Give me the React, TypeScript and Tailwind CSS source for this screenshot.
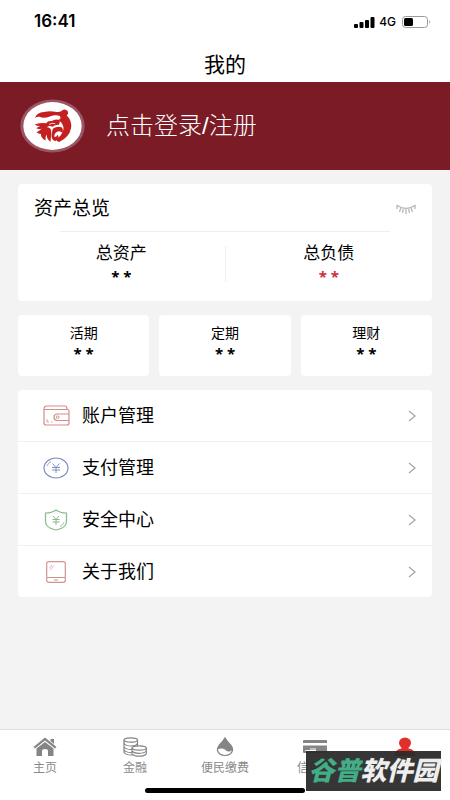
import type { ReactNode } from "react";

const FONT = "font-['Liberation_Sans','Noto_Sans_CJK_SC',sans-serif]";

function DragonLogo() {
  return (
    <svg viewBox="62 58 196 162" className="h-[54px] w-[65px] shrink-0" aria-hidden="true">
      <ellipse cx="160" cy="139" rx="97" ry="80" fill="#9c5563" />
      <ellipse cx="160" cy="139" rx="88" ry="72" fill="#fff" />
      <g fill="#c3201f">
        <path d="M107 115Q113 99 134 97Q152 93 168 96Q180 99 187 94Q193 86 204 92Q211 99 203 107Q219 121 216 146Q210 174 180 187Q172 185 170 179Q190 168 193 149Q194 132 178 121Q188 116 182 109Q170 103 152 110Q133 117 121 111Q113 110 107 115Z" />
        <path d="M106 135Q121 127 141 131Q146 122 158 124Q169 116 183 122L180 135Q168 134 160 141Q150 136 143 143Q155 144 156 154Q156 170 154 187Q142 179 143 165Q138 170 139 183Q125 176 125 163Q117 163 112 158Q122 152 127 147Q117 150 111 146Q117 141 123 139Q113 139 106 135Z" />
        <path d="M161 147Q175 138 187 143Q194 149 190 160Q183 153 174 156Q164 161 166 172Q173 173 176 165Q182 177 169 184Q156 183 157 163Z" />
      </g>
      <path d="M150 134Q159 129 168 132" fill="none" stroke="#fff" strokeWidth="2.5" />
    </svg>
  );
}

function ClosedEye() {
  return (
    <svg viewBox="0 0 20 11" className="h-[11px] w-5" fill="none" stroke="#bdbdbd" strokeWidth="1.4" aria-hidden="true">
      <path d="M0.5 1Q10 8 19.5 1M1 1V5M19 1V5M4.8 4L3.5 8M10 5V10M15.2 4L16.5 8M7.300 4.800L6.500 9M12.700 4.800L13.500 9" />
    </svg>
  );
}

function WalletIcon() {
  return (
    <svg viewBox="0 0 27 21" className="h-[21px] w-[27px]" fill="none" stroke="#d58c8c" aria-hidden="true">
      <path d="M1 4Q1 1 4 1H22Q24 1 24 4M1 4.5H24.5Q26 4.500 26 6V18Q26 20 24 20H3Q1 20 1 18V4M26 9H14Q11 9.500 11 12.200Q11 15 14 15.500H26" strokeWidth="1.200" />
      <circle cx="14.700" cy="12.200" r="1.300" />
      <path d="M4 14V17H6M8 17H9.500" strokeWidth="0.800" />
    </svg>
  );
}

function YuanIcon() {
  return (
    <svg viewBox="0 0 26 22" className="h-[22px] w-[26px]" fill="none" stroke="#7b90c0" aria-hidden="true">
      <ellipse cx="13" cy="11" rx="12" ry="10" strokeWidth="1.200" />
      <path d="M9.500 6.500L13 10.500L16.500 6.500M13 10.500V16M9 10.500H17M9 13H17" />
      <path d="M4 9Q5 6 8 4.500" strokeWidth="0.800" />
    </svg>
  );
}

function ShieldIcon() {
  return (
    <svg viewBox="0 0 24 22" className="h-[22px] w-6" fill="none" stroke="#86b98c" aria-hidden="true">
      <path d="M12 1Q8 4 1.500 4V13Q2 19 12 21Q22 19 22.500 13V4Q16 4 12 1Z" strokeWidth="1.200" />
      <path d="M9 7L12 10.500L15 7M12 10.500V16M8.500 10.500H15.500M8.500 13H15.500" />
      <path d="M20 13Q19 16.500 16 17.500" strokeWidth="0.800" />
    </svg>
  );
}

function TabletIcon() {
  return (
    <svg viewBox="0 0 20 22" className="h-[22px] w-5" fill="none" stroke="#d2938f" aria-hidden="true">
      <rect x="0.700" y="0.700" width="18.600" height="20.600" rx="2" strokeWidth="1.200" />
      <path d="M1 16.500H19M8 19H12" />
      <path d="M3.500 7L6 4M4 9L8 4.500" strokeWidth="0.700" />
    </svg>
  );
}

function Chevron() {
  return (
    <svg viewBox="0 0 8 12" className="h-3 w-2" fill="none" stroke="#a3a3a3" strokeWidth="1.200" aria-hidden="true">
      <path d="M1 1L7 6L1 11" />
    </svg>
  );
}

function HomeIcon() {
  return (
    <svg viewBox="0 0 24 20" className="h-5 w-6" fill="#858585" aria-hidden="true">
      <path d="M12 0.500L23.500 10L22 11.500L12 3.500L2 11.500L0.500 10Z" />
      <path d="M17.500 2H21V7L17.500 4Z" />
      <path d="M12 5L20.500 11.500V19H15V14Q15 12 12 12Q9 12 9 14V19H3.500V11.500Z" />
    </svg>
  );
}

function CoinsIcon() {
  return (
    <svg viewBox="0 0 24 20" className="h-5 w-6" fill="#fff" stroke="#858585" strokeWidth="1.200" aria-hidden="true">
      <path d="M1 3V15.500Q3 18 8 18Q13 18 14.500 15.500V3" />
      <path d="M1 6.500Q3 9 8 9Q13 9 14.500 6.500M1 10Q3 12.500 8 12.500H9M1 13Q3 15.500 8 15.500H9" fill="none" />
      <ellipse cx="7.750" cy="3" rx="6.750" ry="2.200" />
      <path d="M9 11V16.800Q11 19.200 16 19.200Q21.500 19.200 23.300 16.800V11" />
      <path d="M9 14Q11 16.300 16 16.300Q21.500 16.300 23.300 14" fill="none" />
      <ellipse cx="16.150" cy="11" rx="7.150" ry="2.200" />
    </svg>
  );
}

function DropIcon() {
  return (
    <svg viewBox="0 0 18 20" className="h-5 w-[18px]" aria-hidden="true">
      <path d="M9 1Q11 4.500 15 8.500Q17 11 16.500 13.500Q15 18.500 9 18.500Q3 18.500 1.500 13.500Q1 11 3 8.500Q7 4.500 9 1Z" fill="#fff" stroke="#858585" strokeWidth="1.200" />
      <path d="M9 0.500Q11 4.500 15 8.500Q17.500 11 16.500 13Q12.500 16 9.500 13Q6 10.500 1.500 12.500Q1 11 3 8.500Q7 4.500 9 0.500Z" fill="#858585" />
    </svg>
  );
}

function CardIcon() {
  return (
    <svg viewBox="0 0 24 20" className="h-5 w-6" fill="#858585" aria-hidden="true">
      <path d="M0 4Q0 3 1 3H23Q24 3 24 4V6H0Z" />
      <path d="M0 8.500H24V15Q24 16 23 16H1Q0 16 0 15Z" />
      <path d="M2.500 13.500H13M7 12H13" stroke="#fff" strokeWidth="1" />
    </svg>
  );
}

function PersonIcon() {
  return (
    <svg viewBox="0 0 22 20" className="h-5 w-[22px]" fill="#e0302c" aria-hidden="true">
      <ellipse cx="11" cy="6" rx="6" ry="5.500" />
      <path d="M7.500 9H14.500V11.500Q21 12.500 21.500 18V19H0.500V18Q1 12.500 7.500 11.500Z" />
    </svg>
  );
}

function StatusBar() {
  return (
    <div className="flex h-11 items-center justify-between pr-[18px] pl-[34px]">
      <span className="font-[Inter,sans-serif] text-[17px] font-semibold">16:41</span>
      <div className="flex items-center gap-1">
        <svg viewBox="0 0 21 11" className="h-[11px] w-[21px]" aria-hidden="true">
          <rect x="0" y="7" width="4" height="4" rx="1" />
          <rect x="5.500" y="5" width="4" height="6" rx="1" />
          <rect x="11" y="3" width="4" height="8" rx="1" />
          <rect x="16.500" y="0" width="4" height="11" rx="1" />
        </svg>
        <span className="font-[Inter,sans-serif] text-xs font-medium">4G</span>
        <svg viewBox="0 0 30 12" className="ml-0.5 h-3 w-[30px]" aria-hidden="true">
          <rect x="0.500" y="0.500" width="25" height="11" rx="3" fill="none" stroke="#9a9a9a" />
          <rect x="2" y="2" width="9" height="8" rx="1.500" />
          <path d="M27.500 4Q29 6 27.500 8Z" fill="#777" />
        </svg>
      </div>
    </div>
  );
}

function Masked({ color = "text-black" }: { color?: string }) {
  return <span className={`font-['Noto_Sans',sans-serif] text-[15px] leading-5 font-bold ${color}`}>* *</span>;
}

function Total({ label, color }: { label: string; color: string }) {
  return (
    <div className="flex flex-1 flex-col items-center">
      <span className="text-[17px] leading-6">{label}</span>
      <Masked color={color} />
    </div>
  );
}

function MenuRow({ icon, label }: { icon: ReactNode; label: string }) {
  return (
    <li className="border-b border-[#f1f1f1] last:border-b-0">
      <a href="#" className="flex h-[51px] items-center pr-4 pl-6">
        <span className="flex w-7 justify-center">{icon}</span>
        <span className="ml-3 flex-1 text-lg leading-6">{label}</span>
        <Chevron />
      </a>
    </li>
  );
}

function Tab({ icon, label, active = false }: { icon: ReactNode; label: string; active?: boolean }) {
  return (
    <a href="#" className={`flex flex-1 flex-col items-center pt-[7px] ${active ? "text-[#e0302c]" : "text-[#8a8a8a]"}`}>
      {icon}
      <span className="mt-[3px] text-xs leading-4">{label}</span>
    </a>
  );
}

export default function App() {
  return (
    <div className={`relative flex min-h-screen flex-col bg-[#f3f3f3] text-black ${FONT}`}>
      <header className="bg-white">
        <StatusBar />
        <h1 className="flex h-[38px] items-center justify-center pt-1 text-[21px] leading-6">我的</h1>
      </header>

      <a href="#" className="flex h-[88px] items-center bg-[#7a1b26] px-5 text-2xl text-white">
        <DragonLogo />
        <span className="ml-[21px] font-light">点击登录/注册</span>
      </a>

      <main className="flex flex-1 flex-col gap-3.5 px-[18px] pt-3.5">
        <section className="h-[117px] rounded-sm bg-white">
          <div className="flex h-[47px] items-center justify-between px-4 pt-1">
            <h2 className="text-[19px]">资产总览</h2>
            <button type="button" aria-label="显示金额">
              <ClosedEye />
            </button>
          </div>
          <div className="mx-[42px] border-t border-[#eeeeee]" />
          <div className="flex pt-2.5">
            <Total label="总资产" color="text-black" />
            <div className="my-1 w-px bg-[#eeeeee]" />
            <Total label="总负债" color="text-[#c9303c]" />
          </div>
        </section>

        <section className="grid grid-cols-3 gap-2.5">
          {["活期", "定期", "理财"].map((name) => (
            <div key={name} className="flex h-[61px] flex-col items-center rounded bg-white pt-2">
              <span className="text-sm leading-5">{name}</span>
              <Masked />
            </div>
          ))}
        </section>

        <ul className="rounded bg-white">
          <MenuRow icon={<WalletIcon />} label="账户管理" />
          <MenuRow icon={<YuanIcon />} label="支付管理" />
          <MenuRow icon={<ShieldIcon />} label="安全中心" />
          <MenuRow icon={<TabletIcon />} label="关于我们" />
        </ul>
      </main>

      <nav className="border-t border-[#dedede] bg-white pb-[7px]">
        <div className="flex h-[58px]">
          <Tab icon={<HomeIcon />} label="主页" />
          <Tab icon={<CoinsIcon />} label="金融" />
          <Tab icon={<DropIcon />} label="便民缴费" />
          <Tab icon={<CardIcon />} label="信用卡" />
          <Tab icon={<PersonIcon />} label="我的" active />
        </div>
        <div className="mx-auto h-[5px] w-40 rounded-full bg-black" />
      </nav>

      <div className="absolute right-[9px] bottom-[9px] flex h-10 w-[135px] items-center justify-center bg-[#2b2b2b]/95 text-[26px] font-black text-[#eeeeee] italic">
        <span className="text-[#43ad87]">谷普</span>软件园
      </div>
    </div>
  );
}
